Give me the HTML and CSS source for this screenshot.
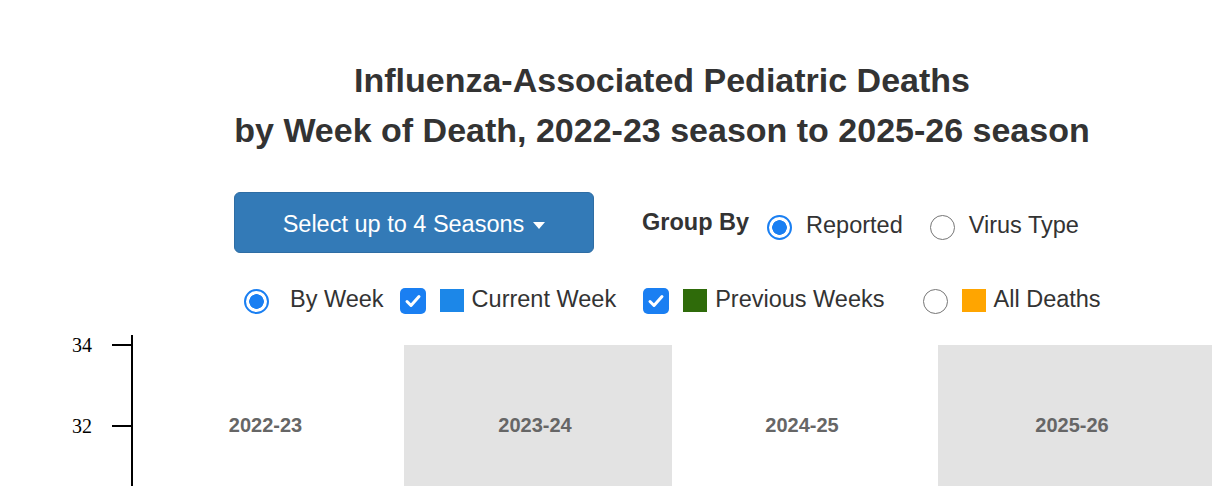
FILE: index.html
```html
<!DOCTYPE html>
<html lang="en">
<head>
<meta charset="utf-8">
<title>Influenza-Associated Pediatric Deaths</title>
<link rel="stylesheet" href="styles.css">
</head>
<body>
<div class="page">
  <h1 class="title">Influenza-Associated Pediatric Deaths<br>by Week of Death, 2022-23 season to 2025-26 season</h1>

  <div class="row row-top">
    <button class="btn-seasons" type="button">Select up to 4 Seasons<span class="caret"></span></button>
    <span class="group-label">Group By</span>
    <div class="options">
      <span class="radio checked"></span>
      <span class="opt-text reported">Reported</span>
      <span class="radio"></span>
      <span class="opt-text">Virus Type</span>
    </div>
  </div>

  <div class="row row-legend">
    <span class="radio checked"></span>
    <span class="opt-text byweek">By Week</span>
    <span class="check"><svg width="26" height="26" viewBox="0 0 26 26"><path d="M7 13.5 L11 17.5 L19 8.5" fill="none" stroke="#fff" stroke-width="3" stroke-linecap="round" stroke-linejoin="round"/></svg></span>
    <span class="swatch sw-current"></span>
    <span class="opt-text current">Current Week</span>
    <span class="check"><svg width="26" height="26" viewBox="0 0 26 26"><path d="M7 13.5 L11 17.5 L19 8.5" fill="none" stroke="#fff" stroke-width="3" stroke-linecap="round" stroke-linejoin="round"/></svg></span>
    <span class="swatch sw-prev"></span>
    <span class="opt-text previous">Previous Weeks</span>
    <span class="radio"></span>
    <span class="swatch sw-all"></span>
    <span class="opt-text">All Deaths</span>
  </div>

  <div class="chart">
    <svg class="yaxis" width="133" height="160" viewBox="0 0 133 160">
      <line x1="132" y1="0" x2="132" y2="160" stroke="#000" stroke-width="2"/>
      <line x1="112" y1="10" x2="132" y2="10" stroke="#000" stroke-width="2"/>
      <line x1="112" y1="91" x2="132" y2="91" stroke="#000" stroke-width="2"/>
      <text x="92" y="17" text-anchor="end" class="tick">34</text>
      <text x="92" y="98" text-anchor="end" class="tick">32</text>
    </svg>
    <div class="plot">
      <div class="band b1"><span class="season">2022-23</span></div>
      <div class="band b2 shaded"><span class="season">2023-24</span></div>
      <div class="band b3"><span class="season">2024-25</span></div>
      <div class="band b4 shaded"><span class="season">2025-26</span></div>
    </div>
  </div>
</div>
</body>
</html>
```

FILE: styles.css
```css
html, body {
  margin: 0;
  padding: 0;
  overflow: hidden;
  background: #fff;
}

body {
  font-family: "Liberation Sans", Arial, Helvetica, sans-serif;
  color: #333;
}

.page {
  width: 1218px;
  height: 486px;
  overflow: hidden;
}

.title {
  margin: 0;
  padding: 55px 0 0 106px;
  font-size: 34px;
  font-weight: bold;
  line-height: 50px;
  text-align: center;
  color: #333;
}

.row {
  display: flex;
  align-items: center;
  font-size: 23.5px;
}

.row-top {
  margin-top: 37px;
  height: 61px;
  padding-left: 234px;
}

.btn-seasons {
  width: 360px;
  height: 61px;
  box-sizing: border-box;
  background: #337ab7;
  border: 1px solid #2e6da4;
  border-radius: 6px;
  color: #fff;
  font-family: inherit;
  font-size: 23.5px;
  padding: 3px 0 0 0;
  display: flex;
  align-items: center;
  justify-content: center;
}

.caret {
  display: inline-block;
  width: 0;
  height: 0;
  margin-left: 9px;
  margin-top: 3px;
  border-top: 7px solid #fff;
  border-left: 6.5px solid transparent;
  border-right: 6.5px solid transparent;
}

.group-label {
  margin-left: 48px;
  font-weight: bold;
  margin-bottom: 1px;
}

.options {
  display: flex;
  align-items: center;
  margin-top: 10px;
  margin-left: 18px;
}

.options .opt-text {
  margin-bottom: 5px;
}

.radio {
  box-sizing: border-box;
  width: 25px;
  height: 25px;
  border-radius: 50%;
  border: 1.5px solid #767676;
  background: #fff;
  flex: none;
}

.radio.checked {
  border: 2px solid #1a7ff2;
  background: radial-gradient(circle, #1a7ff2 0, #1a7ff2 7px, #fff 7.6px);
}

.opt-text {
  margin-left: 14px;
  color: #333;
}

.reported {
  margin-right: 27px;
}

.row-legend {
  margin-top: 35px;
  height: 26px;
  padding-left: 244px;
}

.row-legend .opt-text {
  margin-bottom: 3px;
}

.row-legend .byweek {
  margin-left: 21px;
  margin-right: 16px;
}

.check {
  width: 26px;
  height: 26px;
  border-radius: 5px;
  background: #1a7ff2;
  flex: none;
  display: flex;
}

.swatch {
  width: 24px;
  height: 23px;
  margin-left: 14px;
  margin-top: -1px;
  flex: none;
}

.sw-current { background: #1c87e8; }
.sw-prev { background: #2f6b0a; }
.sw-all { background: #ffa500; }

.row-legend .swatch + .opt-text {
  margin-left: 8px;
}

.current {
  margin-right: 27px;
}

.previous {
  margin-right: 38px;
}

.chart {
  display: flex;
  margin-top: 21px;
  height: 160px;
}

.yaxis {
  flex: none;
  display: block;
}

.tick {
  font-family: "Liberation Serif", "Times New Roman", serif;
  font-size: 20px;
  fill: #000;
}

.plot {
  display: flex;
  margin-top: 10px;
}

.band {
  height: 150px;
  box-sizing: border-box;
  padding-top: 68px;
  padding-right: 6px;
  text-align: center;
}

.b1 { width: 271px; }
.b2 { width: 268px; }
.b3 { width: 266px; }
.b4 { width: 274px; }

.shaded {
  background: #e3e3e3;
}

.season {
  display: block;
  font-size: 20px;
  line-height: 24px;
  font-weight: bold;
  color: #666;
}
```
